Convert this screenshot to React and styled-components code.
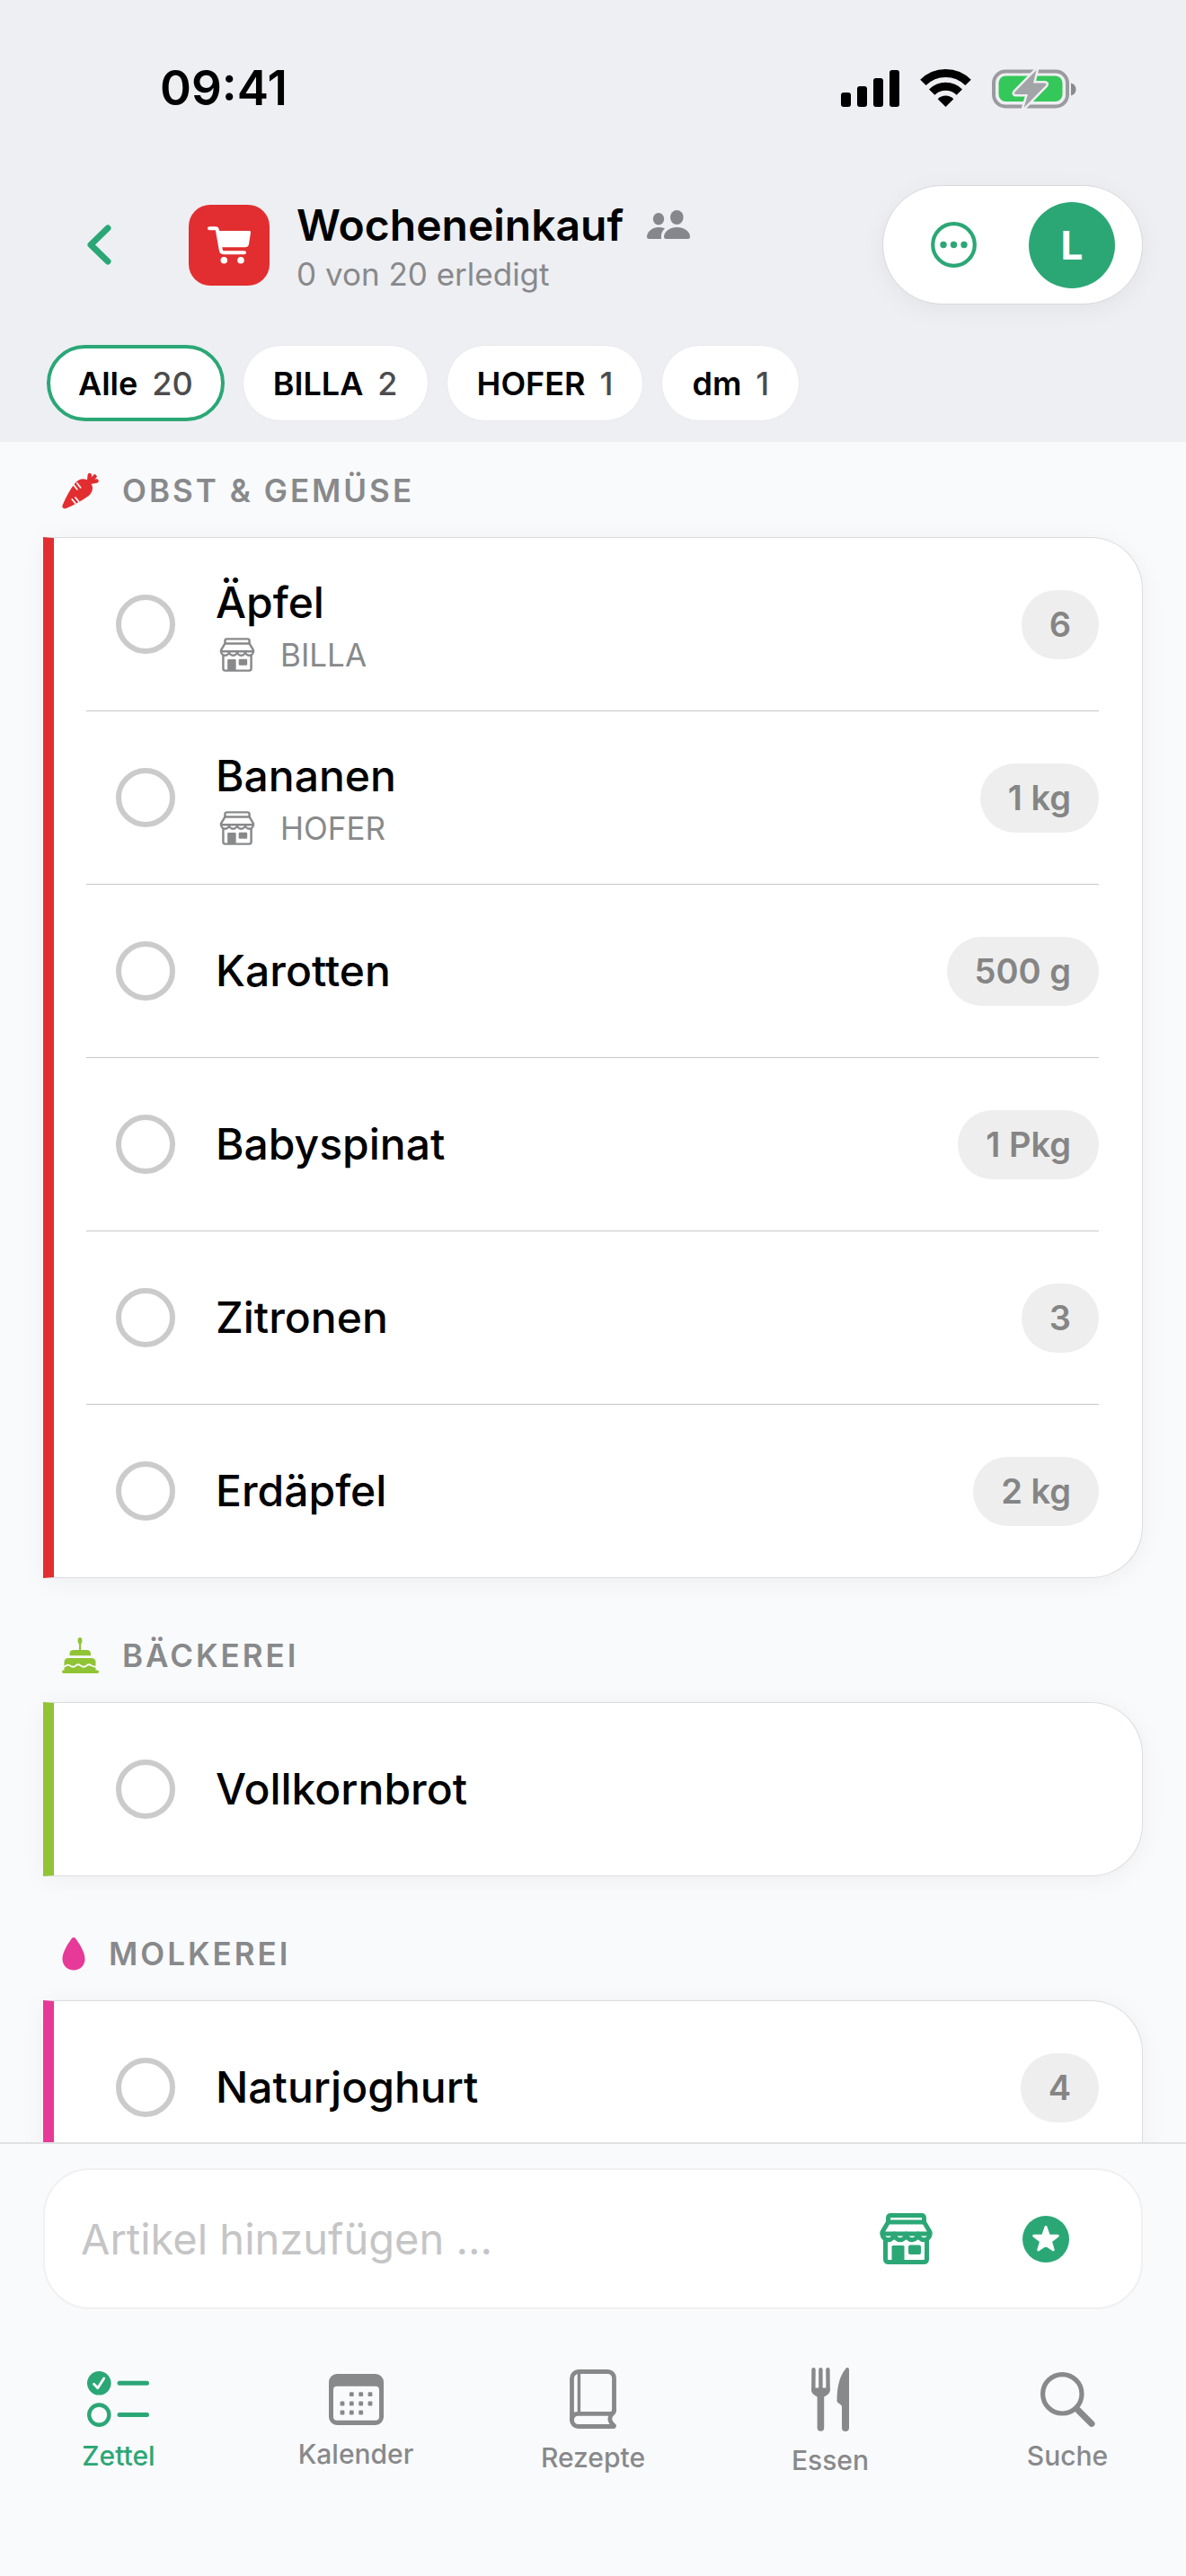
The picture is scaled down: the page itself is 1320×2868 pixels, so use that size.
import React, { useState } from 'react'
import styled, { createGlobalStyle } from 'styled-components'

const green = '#2ba776'
const grey = '#88898b'
const pageBg = '#f9fafc'

const GlobalStyle = createGlobalStyle`
  * {
    box-sizing: border-box;
  }

  body {
    margin: 0;
    background-color: ${pageBg};
    color: black;
    font-family: Inter, 'Liberation Sans', sans-serif;
  }

  button,
  input {
    font-family: inherit;
  }

  button {
    border: none;
    padding: 0;
    background: none;
    cursor: pointer;
  }
`

const Screen = styled.div`
  display: flex;
  flex-direction: column;
  height: 100vh;
`

const Header = styled.header`
  flex: none;
  background-color: #eeeff3;
  padding-bottom: 23px;
`

const StatusBar = styled.div`
  display: flex;
  align-items: center;
  justify-content: space-between;
  padding: 66px 122px 76px 178px;
`

const Time = styled.span`
  font-size: 53px;
  line-height: 64px;
  font-weight: 600;
`

const StatusIcons = styled.div`
  display: flex;
  align-items: center;
  gap: 23px;
`

const TitleBar = styled.div`
  display: flex;
  align-items: center;
  padding: 0 48px;
`

const BackButton = styled.button`
  display: flex;
  align-items: center;
  justify-content: center;
  width: 124px;
  height: 96px;
  margin-right: 38px;
`

const ListIcon = styled.div`
  display: flex;
  align-items: center;
  justify-content: center;
  width: 90px;
  height: 90px;
  border-radius: 24px;
  background-color: #e22e30;
`

const TitleBlock = styled.div`
  flex: 1;
  padding-left: 30px;
`

const TitleLine = styled.div`
  display: flex;
  align-items: center;
  gap: 26px;
`

const Title = styled.h1`
  margin: 0;
  font-size: 48px;
  line-height: 64px;
  font-weight: 600;
`

const Subtitle = styled.p`
  margin: 0;
  font-size: 35px;
  line-height: 44px;
  color: ${grey};
`

const Tools = styled.div`
  display: flex;
  align-items: center;
  justify-content: space-between;
  width: 290px;
  height: 133px;
  padding: 0 30px;
  border: 1px solid #d8d8db;
  border-radius: 67px;
  background-color: white;
  box-shadow: 0 6px 28px rgba(0, 0, 0, 0.05);
`

const MoreButton = styled.button`
  display: flex;
  align-items: center;
  justify-content: center;
  width: 96px;
  height: 96px;
`

const Avatar = styled.button`
  width: 96px;
  height: 96px;
  border-radius: 50%;
  background-color: ${green};
  color: white;
  font-size: 44px;
  font-weight: 700;
`

const Chips = styled.div`
  display: flex;
  gap: 20px;
  padding: 45px 52px 0;
`

const Chip = styled.button`
  display: flex;
  align-items: center;
  gap: 16px;
  height: 85px;
  padding: 0 ${(props) => (props.$active ? '31px' : '33px')};
  border: ${(props) => (props.$active ? `4px solid ${green}` : '1px solid #e9eaec')};
  border-radius: 43px;
  background-color: white;
  font-size: 36px;
  font-weight: 600;
  color: black;
`

const ChipCount = styled.span`
  font-weight: 500;
  color: #4c4c4c;
`

const List = styled.main`
  flex: 1;
  min-height: 0;
  padding: 2px 48px 0;
  overflow-y: auto;
  scrollbar-width: none;
`

const Group = styled.section`
  & + & {
    margin-top: 34px;
  }
`

const GroupTitle = styled.h2`
  display: flex;
  align-items: center;
  gap: 26px;
  height: 104px;
  margin: 0;
  padding-left: 21px;
  font-size: 35px;
  font-weight: 600;
  letter-spacing: 3px;
  text-transform: uppercase;
  color: ${grey};
`

const Card = styled.ul`
  margin: 0;
  padding: 0 48px 0 36px;
  list-style: none;
  border: 1px solid #dcdcdf;
  border-left: 12px solid ${(props) => props.$color};
  border-radius: 0 58px 58px 0;
  background-color: white;
  box-shadow: 0 4px 28px rgba(0, 0, 0, 0.05);

  ${Group}:last-child & {
    padding-bottom: 96px;
  }
`

const Row = styled.li`
  display: flex;
  align-items: center;
  gap: 45px;
  height: 193px;
  padding-left: 33px;
  border-bottom: 1px solid #c8c8ca;

  &:last-child {
    height: 192px;
    border-bottom: none;
  }
`

const Check = styled.input`
  appearance: none;
  flex: none;
  width: 66px;
  height: 66px;
  margin: 0;
  border: 6px solid #cbcbcb;
  border-radius: 50%;
  cursor: pointer;

  &:checked {
    border-color: ${green};
    background-color: ${green};
  }
`

const ItemText = styled.div`
  flex: 1;
`

const ItemName = styled.label`
  display: block;
  font-size: 48px;
  line-height: 68px;
  font-weight: 500;
`

const Store = styled.div`
  display: flex;
  align-items: center;
  gap: 28px;
  padding-left: 4px;
  font-size: 35px;
  line-height: 48px;
  color: ${grey};
`

const Amount = styled.span`
  display: flex;
  align-items: center;
  height: 77px;
  padding: 0 31px;
  border-radius: 39px;
  background-color: #eeeeee;
  font-size: 38px;
  font-weight: 600;
  color: #858585;
`

const BottomBar = styled.footer`
  flex: none;
  padding: 27px 48px 47px;
  border-top: 2px solid #e0e1e3;
`

const AddForm = styled.form`
  display: flex;
  align-items: center;
  height: 157px;
  padding: 0 54px 0 40px;
  border: 2px solid #f0f0f1;
  border-radius: 52px;
  background-color: white;
`

const AddInput = styled.input`
  flex: 1;
  min-width: 0;
  height: 100px;
  padding: 0;
  border: none;
  outline: none;
  background: none;
  font-size: 47px;
  color: black;

  &::placeholder {
    color: #c5c5c6;
    opacity: 1;
  }
`

const FormButton = styled.button`
  display: flex;
  align-items: center;
  justify-content: center;
  width: 104px;
  height: 104px;
  margin-left: 52px;
`

const Tabs = styled.nav`
  display: flex;
  height: 250px;
  margin: 0 -48px;
`

const Tab = styled.a`
  flex: 1;
  display: flex;
  flex-direction: column;
  align-items: center;
  justify-content: center;
  gap: 14px;
  font-size: 30px;
  line-height: 36px;
  font-weight: 500;
  text-decoration: none;
  color: ${(props) => (props.$active ? green : grey)};
`

const SignalIcon = () => (
  <svg width='65' height='41' viewBox='0 0 65 41'>
    <rect x='0' y='25' width='11' height='16' rx='3' />
    <rect x='18' y='18' width='11' height='23' rx='3' />
    <rect x='36' y='9' width='11' height='32' rx='3' />
    <rect x='54' y='0' width='11' height='41' rx='3' />
  </svg>
)

const WifiIcon = () => (
  <svg width='57' height='42' viewBox='0 0 57 42'>
    <g fill='none' stroke='black' strokeWidth='9'>
      <path d='M3.4 14.9a35.5 35.5 0 0 1 50.2 0' />
      <path d='M13.2 25.6a21.5 21.5 0 0 1 30.6 0' />
    </g>
    <path d='M28.5 42l-8.8-8.8a12.5 12.5 0 0 1 17.6 0z' />
  </svg>
)

const BatteryIcon = () => (
  <svg width='94' height='47' viewBox='0 0 94 47'>
    <rect x='2' y='4.5' width='82' height='39' rx='13' fill='none' stroke='#9b9b9f' strokeWidth='4' />
    <rect x='7.5' y='9.5' width='71' height='28.5' rx='8' fill='#34c759' />
    <path d='M88 17.5c3.5 1 5.5 3.5 5.5 7s-2 6-5.5 7z' fill='#8a8a8c' />
    <path
      d='M49.5 3L25.5 27.5q-1.5 2.5 1.5 2.5h13L35.5 45L60 20q1.5-2.5-1.5-2.5H46z'
      fill='#a3a4a7'
      stroke='#eeeff3'
      strokeWidth='5'
      paintOrder='stroke'
      strokeLinejoin='round'
    />
  </svg>
)

const BackIcon = () => (
  <svg width='27' height='45' viewBox='0 0 27 45'>
    <path
      d='M23 4L4 22.5L23 41'
      fill='none'
      stroke={green}
      strokeWidth='7'
      strokeLinecap='round'
      strokeLinejoin='round'
    />
  </svg>
)

const CartIcon = () => (
  <svg width='48' height='42' viewBox='0 0 48 42'>
    <path
      d='M2 2.3h7q1.5 0 1.8 1.5l4 22.5q.5 3 3.5 3H41'
      fill='none'
      stroke='white'
      strokeWidth='4'
      strokeLinecap='round'
      strokeLinejoin='round'
    />
    <path d='M11 5h35.5q1.7 0 1.5 1.8l-2 13q-.5 3.4-4 3.4H14z' fill='white' />
    <circle cx='18.3' cy='37.7' r='3.8' fill='white' />
    <circle cx='37' cy='37.7' r='3.8' fill='white' />
  </svg>
)

const PeopleIcon = () => (
  <svg width='49' height='33' viewBox='0 0 49 33' fill='#86878c'>
    <ellipse cx='13' cy='9.7' rx='6.2' ry='6.8' />
    <ellipse cx='33.3' cy='8' rx='7.3' ry='8' />
    <path d='M0 30c0-6 6-11 13-11c3 0 5 .5 7 1.5c-3.5 3-4.5 6-4 11.5H2.5c-1.5 0-2.5-1-2.5-2z' />
    <path d='M19 29.5c0-5 6-10.5 14.5-10.5s14.5 5.5 14.5 10.5c0 1.8-1 2.5-2.5 2.5h-24c-1.5 0-2.5-.7-2.5-2.5z' />
  </svg>
)

const MoreIcon = () => (
  <svg width='51' height='51' viewBox='0 0 51 51' fill={green}>
    <circle cx='25.5' cy='25.5' r='23.3' fill='none' stroke={green} strokeWidth='4.2' />
    <circle cx='14' cy='25.5' r='3.7' />
    <circle cx='25.5' cy='25.5' r='3.7' />
    <circle cx='37' cy='25.5' r='3.7' />
  </svg>
)

const StoreIcon = ({ size, color, stroke }) => (
  <svg width={size} height={size} viewBox='0 0 59 59'>
    <g fill='none' stroke={color} strokeWidth={stroke} strokeLinejoin='round' strokeLinecap='round'>
      <path d='M9.5 11V6.5q0-3 3-3h34q3 0 3 3V11z' />
      <path d='M9.5 11L3 22v2h53v-2L49.5 11' />
      <path d='M3 24a6.6 6.6 0 0 0 13.25 0a6.6 6.6 0 0 0 13.25 0a6.6 6.6 0 0 0 13.25 0a6.6 6.6 0 0 0 13.25 0' />
      <path d='M6.5 30.5V52q0 3.5 3.5 3.5h39q3.5 0 3.5-3.5V30.5' />
    </g>
    <rect x='13.5' y='37' width='14' height='18' rx='1.5' fill={color} />
    <rect x='32' y='36.5' width='14' height='10.5' rx='2' fill={color} />
  </svg>
)

const StarIcon = () => (
  <svg width='52' height='52' viewBox='0 0 52 52'>
    <circle cx='26' cy='26' r='26' fill={green} />
    <path
      d='M26 12.5L29.3 21.9L39.3 22.2L31.4 28.3L34.2 37.8L26 32.2L17.8 37.8L20.6 28.3L12.7 22.2L22.7 21.9z'
      fill='white'
      stroke='white'
      strokeWidth='3'
      strokeLinejoin='round'
    />
  </svg>
)

const CarrotIcon = () => (
  <svg width='41' height='41' viewBox='0 0 41 41'>
    <path
      d='M.6 36.5C4 28 8.5 19.5 14.5 12C18 7.5 23 6 27.5 8L33 13.5C35.5 18 33 23.5 29 26.5C21 32 13 36.5 4.5 40C2 41-.5 39.5.6 36.5z'
      fill='#e22e30'
    />
    <g stroke='#e22e30' strokeWidth='4.5' strokeLinecap='round'>
      <path d='M30 11L30.8 3' />
      <path d='M30 11L36.5 4.5' />
      <path d='M30 11L38.5 9.5' />
    </g>
    <g stroke={pageBg} strokeWidth='1.8' strokeLinecap='round'>
      <path d='M13 14l3.8 4.8' />
      <path d='M16.8 12l3.8 4.8' />
      <path d='M11.3 30l3.5 4.3' />
      <path d='M15 28l3.5 4.3' />
    </g>
  </svg>
)

const CakeIcon = () => (
  <svg width='41' height='40' viewBox='0 0 41 40' fill='#90c435'>
    <ellipse cx='20' cy='3.7' rx='2.4' ry='3.7' />
    <rect x='19' y='5' width='2.2' height='10' />
    <path d='M8.5 20.3v-2q0-4.3 4.5-4.3h14.5q4.5 0 4.5 4.3v2z' />
    <path d='M2.5 37v-9.5q0-4.5 5-4.5h25q5 0 5 4.5V37z' />
    <rect x='0' y='36.5' width='41' height='3.5' rx='1.7' />
    <path
      d='M2 32.5q1.5 0 3-1.2q1.5-1.2 3.5 0q4 2.8 7 0q2.5-2 5 0q4 2.8 7 0q2.5-2 5 0q3 1.8 5.5 1.2'
      fill='none'
      stroke={pageBg}
      strokeWidth='1.8'
    />
  </svg>
)

const DropIcon = () => (
  <svg width='26' height='37' viewBox='0 0 26 37'>
    <path
      d='M13 0c1.2 0 2 .9 2.8 2.1C20.5 9 25.5 17 25.5 24C25.5 31.5 20 36.5 13 36.5S.5 31.5.5 24C.5 17 5.5 9 10.2 2.1C11 .9 11.8 0 13 0z'
      fill='#e73997'
    />
  </svg>
)

const ChecklistIcon = () => (
  <svg width='70' height='62' viewBox='0 0 70 62' fill='none' stroke={green} strokeLinecap='round'>
    <circle cx='13.3' cy='13.3' r='13.3' fill={green} stroke='none' />
    <path d='M7.5 14.2l4.3 4.6l6.9-10.9' stroke='white' strokeWidth='2.8' strokeLinejoin='round' />
    <circle cx='13.3' cy='48.6' r='11.1' strokeWidth='4.4' />
    <path d='M36 13.3h30.5M36 48.6h30.5' strokeWidth='5' />
  </svg>
)

const calendarDots = [
  [25.3, 22.7], [35.7, 22.7], [46, 22.7],
  [15, 33], [25.3, 33], [35.7, 33], [46, 33],
  [15, 43], [25.3, 43], [35.7, 43],
]

const CalendarIcon = () => (
  <svg width='61' height='57' viewBox='0 0 61 57' fill={grey}>
    <path
      fillRule='evenodd'
      d='M9 0h43a9 9 0 0 1 9 9v39a9 9 0 0 1-9 9H9a9 9 0 0 1-9-9V9a9 9 0 0 1 9-9zM9 13.7a4 4 0 0 0-4 4V47.7a4 4 0 0 0 4 4h43a4 4 0 0 0 4-4V17.7a4 4 0 0 0-4-4z'
    />
    {calendarDots.map(([x, y]) => (
      <rect key={`${x}-${y}`} x={x - 2.4} y={y - 2.4} width='4.8' height='4.8' rx='1.2' />
    ))}
  </svg>
)

const BookIcon = () => (
  <svg width='52' height='66' viewBox='0 0 52 66' fill='none' stroke={grey} strokeWidth='4.8' strokeLinecap='round'>
    <path d='M49.5 46V9.5a7 7 0 0 0-7-7H10a7.5 7.5 0 0 0-7.5 7.5V56.5a7 7 0 0 0 7 7H49.3' />
    <path d='M2.5 56.5q0-7.2 7-7.2H46q3.5-.3 3.5-4' />
    <path d='M48.5 48C43.5 53.5 43.5 57.5 49.3 62.5' />
    <path d='M10.4 3V49' strokeWidth='3.4' strokeLinecap='butt' />
  </svg>
)

const CutleryIcon = () => (
  <svg width='43' height='71' viewBox='0 0 43 71' fill={grey}>
    <g stroke={grey} strokeLinecap='round'>
      <path d='M2.5 2.3L2.3 24M10.4 2.3V24M18.4 2.3L18.6 24' strokeWidth='4.4' />
      <path d='M10.4 31V67' strokeWidth='7.6' />
    </g>
    <path d='M.1 22.5h20.7V25c0 4-3 5.5-6.5 7.5H6.6C3.1 30.5.1 29 .1 25z' />
    <path d='M42 2.5C42-.5 39.5-.5 38 1.5C32 9 28.5 20 28.5 37C28.5 40 33.5 40 34 43.5V67a4 4 0 0 0 8 0z' />
  </svg>
)

const SearchIcon = () => (
  <svg width='61' height='61' viewBox='0 0 61 61' fill='none' stroke={grey}>
    <circle cx='24.3' cy='24.3' r='21.7' strokeWidth='5.2' />
    <path d='M40.5 41L57 57.5' strokeWidth='7' strokeLinecap='round' />
  </svg>
)

const stores = [
  { name: 'Alle', count: 20 },
  { name: 'BILLA', count: 2 },
  { name: 'HOFER', count: 1 },
  { name: 'dm', count: 1 },
]

const groups = [
  {
    name: 'Obst & Gemüse',
    color: '#e22e30',
    Icon: CarrotIcon,
    items: [
      { name: 'Äpfel', store: 'BILLA', amount: '6' },
      { name: 'Bananen', store: 'HOFER', amount: '1 kg' },
      { name: 'Karotten', amount: '500 g' },
      { name: 'Babyspinat', amount: '1 Pkg' },
      { name: 'Zitronen', amount: '3' },
      { name: 'Erdäpfel', amount: '2 kg' },
    ],
  },
  {
    name: 'Bäckerei',
    color: '#90c435',
    Icon: CakeIcon,
    items: [{ name: 'Vollkornbrot' }],
  },
  {
    name: 'Molkerei',
    color: '#e73997',
    Icon: DropIcon,
    items: [{ name: 'Naturjoghurt', amount: '4' }],
  },
]

const tabs = [
  { name: 'Zettel', Icon: ChecklistIcon },
  { name: 'Kalender', Icon: CalendarIcon },
  { name: 'Rezepte', Icon: BookIcon },
  { name: 'Essen', Icon: CutleryIcon },
  { name: 'Suche', Icon: SearchIcon },
]

const Item = ({ item }) => {
  const id = `item-${item.name}`

  return (
    <Row>
      <Check type='checkbox' id={id} />
      <ItemText>
        <ItemName htmlFor={id}>{item.name}</ItemName>
        {item.store && (
          <Store>
            <StoreIcon size={40} color={grey} stroke={3.6} />
            {item.store}
          </Store>
        )}
      </ItemText>
      {item.amount && <Amount>{item.amount}</Amount>}
    </Row>
  )
}

export default function App() {
  const [store, setStore] = useState('Alle')
  const [text, setText] = useState('')

  return (
    <Screen>
      <GlobalStyle />
      <Header>
        <StatusBar>
          <Time>09:41</Time>
          <StatusIcons>
            <SignalIcon />
            <WifiIcon />
            <BatteryIcon />
          </StatusIcons>
        </StatusBar>
        <TitleBar>
          <BackButton aria-label='Zurück'>
            <BackIcon />
          </BackButton>
          <ListIcon>
            <CartIcon />
          </ListIcon>
          <TitleBlock>
            <TitleLine>
              <Title>Wocheneinkauf</Title>
              <PeopleIcon />
            </TitleLine>
            <Subtitle>0 von 20 erledigt</Subtitle>
          </TitleBlock>
          <Tools>
            <MoreButton aria-label='Mehr'>
              <MoreIcon />
            </MoreButton>
            <Avatar>L</Avatar>
          </Tools>
        </TitleBar>
        <Chips>
          {stores.map(({ name, count }) => (
            <Chip key={name} $active={name === store} onClick={() => setStore(name)}>
              {name} <ChipCount>{count}</ChipCount>
            </Chip>
          ))}
        </Chips>
      </Header>
      <List>
        {groups.map(({ name, color, Icon, items }) => (
          <Group key={name}>
            <GroupTitle>
              <Icon />
              {name}
            </GroupTitle>
            <Card $color={color}>
              {items.map((item) => (
                <Item key={item.name} item={item} />
              ))}
            </Card>
          </Group>
        ))}
      </List>
      <BottomBar>
        <AddForm onSubmit={(e) => e.preventDefault()}>
          <AddInput
            aria-label='Artikel hinzufügen'
            placeholder='Artikel hinzufügen ...'
            value={text}
            onChange={(e) => setText(e.target.value)}
          />
          <FormButton type='button' aria-label='Geschäft'>
            <StoreIcon size={59} color={green} stroke={5} />
          </FormButton>
          <FormButton type='button' aria-label='Favoriten'>
            <StarIcon />
          </FormButton>
        </AddForm>
        <Tabs>
          {tabs.map(({ name, Icon }) => (
            <Tab key={name} href={`#${name.toLowerCase()}`} $active={name === 'Zettel'}>
              <Icon />
              {name}
            </Tab>
          ))}
        </Tabs>
      </BottomBar>
    </Screen>
  )
}
